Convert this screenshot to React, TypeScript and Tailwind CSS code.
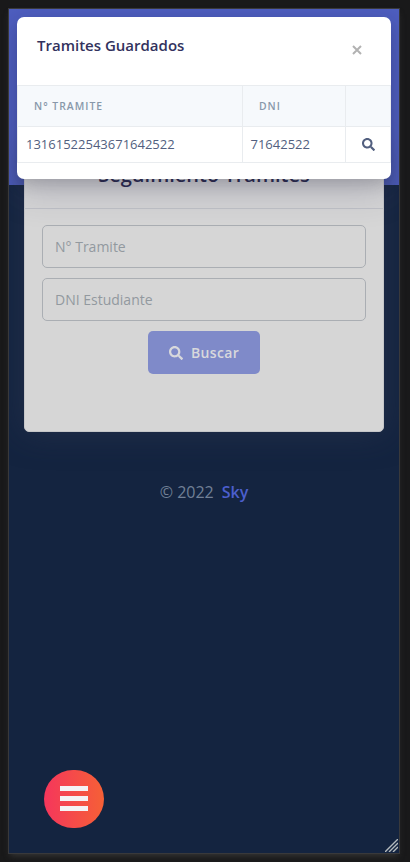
import React from "react";
import { FaSearch } from "react-icons/fa";

function SavedModal() {
  return (
    <section className="absolute top-2 left-2 z-20 flex h-[162px] w-[374px] flex-col overflow-hidden rounded-[7px] bg-white shadow-[0_15px_35px_rgba(50,50,93,0.2),0_5px_15px_rgba(0,0,0,0.17)]">
      <header className="flex h-[68px] shrink-0 items-start justify-between pl-5 pr-7">
        <h2 className="mt-[17px] text-[15px] leading-[22px] font-semibold text-[#32325d]">Tramites Guardados</h2>
        <button aria-label="Cerrar" className="mt-[27px] flex h-3 w-3 items-center justify-center">
          <svg viewBox="0 0 12 12" className="h-3 w-3" stroke="#b2b2b2" strokeWidth="2" fill="none">
            <path d="M2 2 10 10M10 2 2 10" />
          </svg>
        </button>
      </header>
      <div className="border-y border-[#e9ecef]">
        <div className="grid h-[40px] grid-cols-[225px_103px_46px] bg-[#f6f9fc] text-[10.4px] font-semibold tracking-[1px] text-[#8898aa]">
          <div className="flex items-center border-l border-[#e9ecef] pt-[2px] pl-4">N° TRAMITE</div>
          <div className="flex items-center border-l border-[#e9ecef] pt-[2px] pl-4">DNI</div>
          <div className="border-x border-[#e9ecef]" />
        </div>
        <div className="grid h-[36px] grid-cols-[225px_103px_46px] border-t border-[#e9ecef] text-[13px] text-[#525f7f]">
          <div className="flex items-center border-l border-[#e9ecef] pl-2">13161522543671642522</div>
          <div className="flex items-center border-l border-[#e9ecef] pl-[7.5px]">71642522</div>
          <div className="flex items-center justify-center border-x border-[#e9ecef]">
            <FaSearch className="h-[13px] w-[13px]" />
          </div>
        </div>
      </div>
    </section>
  );
}

export default function App() {
  return (
    <div className="h-[862px] w-[410px] overflow-hidden bg-[#19191a] p-2 font-['Open_Sans','Noto_Sans',sans-serif]">
      <div className="relative h-[846px] w-[392px] overflow-hidden border border-[#39393b] bg-[linear-gradient(#4e5ebf_0px,#4e5ebf_176px,#142440_176px)] px-[15px] shadow-[0_4px_6px_-2px_#353535]">
        <main className="mt-[135px] flex h-[288px] w-[360px] flex-col rounded-[5px] border border-[#c5c6c8] bg-[#d6d6d6] shadow-[0_0_32px_rgba(50,60,83,0.5)]">
          <div className="flex h-[64px] items-start justify-center border-b border-[#c0c2c7] pt-[15px]">
            <h1 className="text-[20px] leading-[30px] font-semibold whitespace-nowrap text-[#2a2a4e]">Seguimiento Tramites</h1>
          </div>
          <form className="flex flex-col items-center pt-4">
            <input aria-label="N° Tramite" placeholder="N° Tramite" className="h-[43px] w-[324px] rounded-[5px] border border-[#aaaeb3] px-3 text-[14px] text-[#525f7f] placeholder:text-[#92999f] placeholder:opacity-100" />
            <input aria-label="DNI Estudiante" placeholder="DNI Estudiante" className="mt-[10px] h-[43px] w-[324px] rounded-[5px] border border-[#aaaeb3] px-3 text-[14px] text-[#525f7f] placeholder:text-[#92999f] placeholder:opacity-100" />
            <button type="button" className="mt-[10px] flex h-[43px] w-[112px] items-center justify-center gap-2 rounded-[5px] bg-[#7f8ac9] text-[14px] font-semibold tracking-[0.35px] text-[#d8d8dc]">
              <FaSearch className="h-[14px] w-[14px]" />
              <span>Buscar</span>
            </button>
          </form>
        </main>
        <footer className="mt-[48px] flex justify-center gap-2 text-[16px] leading-6 text-[#718096]">
          <span>© 2022</span>
          <a className="font-semibold text-[#4c5fcd]">Sky</a>
        </footer>
        <SavedModal />
        <button aria-label="Menu" className="absolute top-[761px] left-[35px] flex h-[58px] w-[60px] flex-col items-center justify-center gap-[5px] rounded-full bg-[linear-gradient(90deg,#f5365c,#f56036)] pb-[2px]">
          <span className="h-[5px] w-7 bg-[#f4f3f5]" />
          <span className="h-[5px] w-7 bg-[#f4f3f5]" />
          <span className="h-[5px] w-7 bg-[#f4f3f5]" />
        </button>
        <svg className="absolute right-[1px] bottom-[1px] h-[13px] w-[13px]" viewBox="0 0 13 13" stroke="#b4babd" strokeWidth="1.4">
          <path d="M0 13 13 0M4 13 13 4M8 13 13 8" />
        </svg>
      </div>
    </div>
  );
}
